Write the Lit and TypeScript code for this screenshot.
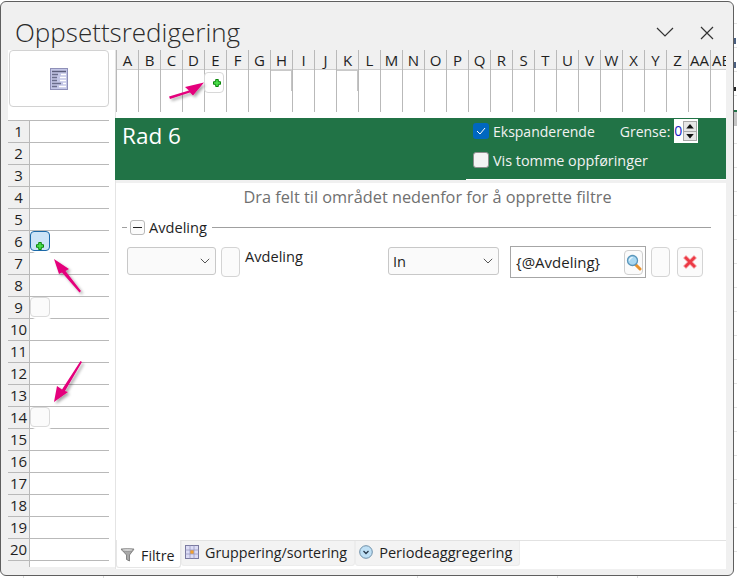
import { LitElement, html, css, svg } from "lit";
import { customElement } from "lit/decorators.js";

const COLS = "A B C D E F G H I J K L M N O P Q R S T U V W X Y Z AA AB".split(" ");
const ROWS = Array.from({ length: 21 }, (_, i) => i + 1);

const plus = svg`<svg class="plus" width="8" height="8" viewBox="0 0 8 8"><path d="M2.700.5h2.600v2.200h2.200v2.600H5.300v2.200H2.700V5.300H.5V2.700h2.200z" fill="#4be04b" stroke="#0c860c" stroke-width="1"/></svg>`;
const chevron = svg`<svg class="chev" width="10" height="6" viewBox="0 0 10 6"><path d="M.8.8L5 5l4.200-4.200" fill="none" stroke="#555" stroke-width="1"/></svg>`;

@customElement("app-root")
export class AppRoot extends LitElement {
  static styles = css`
    :host {
      display: block;
      position: relative;
      width: 737px;
      height: 578px;
      overflow: hidden;
      background:
        repeating-linear-gradient(to bottom, transparent 0 23px, #e2e2e2 23px 24px);
      font-family: "Open Sans", "Liberation Sans", sans-serif;
      color: #1f1f1f;
    }
    .edge {
      position: absolute;
      left: 734px;
      top: 110px;
      width: 3px;
      height: 14px;
      background: #c6c6c6;
      border-top: 2px solid #217346;
    }
    .frag {
      position: absolute;
      left: 734px;
      width: 2px;
      background: #4a5f80;
    }
    .f1 { top: 38px; height: 6px; }
    .f2 { top: 62px; height: 6px; }
    .f3 { top: 87px; height: 4px; background: #222; }
    .foot {
      position: absolute;
      left: 0;
      top: 575px;
      width: 737px;
      height: 3px;
      background:
        linear-gradient(#dcdcdc, #dcdcdc) 23px 0 / 1px 3px no-repeat,
        linear-gradient(#dcdcdc, #dcdcdc) 103px 0 / 1px 3px no-repeat,
        linear-gradient(#dcdcdc, #dcdcdc) 417px 0 / 1px 3px no-repeat,
        linear-gradient(#dcdcdc, #dcdcdc) 557px 0 / 1px 3px no-repeat,
        linear-gradient(#dcdcdc, #dcdcdc) 637px 0 / 1px 3px no-repeat,
        #fff;
    }
    .window {
      position: relative;
      box-sizing: border-box;
      width: 734px;
      height: 575px;
      margin-top: 1px;
      background: #f0f0f0;
      border: 1px solid #5f5f5f;
      border-radius: 6px;
      display: flex;
      flex-direction: column;
      padding: 0 7px 6px 7px;
    }
    .titlebar {
      height: 48px;
      flex: none;
      display: flex;
      align-items: center;
      padding-top: 11px;
      box-sizing: border-box;
    }
    .title {
      font-size: 26px;
      line-height: 36px;
      font-weight: 300;
      color: #2b2b2b;
      margin-left: 7px;
      flex: 1;
    }
    .winbtn { margin-right: 25px; display: block; }
    .winbtn.down { margin-right: 29px; }
    .winbtn.close { margin-right: 12px; margin-left: -3px; margin-top: 2px; }
    .body {
      flex: 1;
      min-height: 0;
      display: grid;
      grid-template-columns: 107px 1fr;
      overflow: hidden;
    }
    .left {
      display: flex;
      flex-direction: column;
      overflow: hidden;
      height: 517px;
      background: #fff;
    }
    .card {
      flex: none;
      box-sizing: border-box;
      margin-left: 1px;
      width: 100px;
      height: 57px;
      border: 1px solid #d2d2d2;
      border-radius: 4px;
      display: flex;
      align-items: center;
      justify-content: center;
    }
    .rows {
      margin-top: 13px;
      border-top: 1px solid #b9b9b9;
      width: 101px;
    }
    .row {
      display: flex;
      height: 22px;
      flex: none;
    }
    .rownum {
      width: 22px;
      box-sizing: border-box;
      background: #f0f0f0;
      border-bottom: 1px solid #b9b9b9;
      border-right: 1px solid #b9b9b9;
      font-size: 15px;
      line-height: 21px;
      text-align: center;
    }
    .rowcell {
      flex: 1;
      border-bottom: 1px solid #b9b9b9;
      position: relative;
    }
    .rowbtn {
      position: absolute;
      left: 0;
      top: 0;
      box-sizing: border-box;
      width: 20px;
      height: 20px;
      border: 1px solid #dadada;
      border-radius: 4px;
      background: #fbfbfb;
      box-shadow: 2px 2px 0 #fff;
      display: flex;
      align-items: flex-start;
      justify-content: center;
    }
    .rowbtn.on {
      background: #cde4f7;
      border: 1px solid #1c69a8;
      padding-top: 10px;
    }
    .right {
      display: flex;
      flex-direction: column;
      min-width: 0;
      border-left: 1px solid #e4e4e4;
      background: #fff;
    }
    .cols {
      display: flex;
      flex: none;
      height: 62px;
      overflow: hidden;
    }
    .col {
      flex: 0 0 22px;
      box-sizing: border-box;
      border-left: 1px solid #b9b9b9;
      display: flex;
      flex-direction: column;
      position: relative;
    }
    .colhead {
      height: 21px;
      background: #f0f0f0;
      border-bottom: 1px solid #cfcfcf;
      font-size: 15px;
      line-height: 21px;
      text-align: center;
      white-space: nowrap;
      overflow: hidden;
    }
    .slot {
      height: 21px;
      flex: none;
      box-sizing: border-box;
    }
    .slot.ghost {
      background: #fff;
      border-top: 1px solid #c9c9c9;
      border-right: 2px solid #c4c4c4;
      margin-right: -1px;
    }
    .colbtn {
      position: absolute;
      left: -1px;
      top: 22px;
      box-sizing: border-box;
      width: 20px;
      height: 21px;
      background: #fff;
      border: 1px solid #d8d8d8;
      border-radius: 4px;
      display: flex;
      justify-content: flex-end;
      padding: 6px 2px 0 0;
    }
    .green {
      flex: none;
      margin-top: 6px;
      margin-left: -1px;
      height: 62px;
      background: #217346;
      color: #fff;
      display: flex;
      justify-content: space-between;
    }
    .rad {
      font-size: 22.500px;
      line-height: 30px;
      margin: 3px 0 0 7px;
    }
    .opts {
      width: 260px;
      box-sizing: border-box;
      padding: 3px 0 0 7px;
      border-bottom: 1px solid #fff;
      display: flex;
      flex-direction: column;
      gap: 9px;
      font-size: 14px;
      color: #f2f2f2;
    }
    .opt { display: flex; align-items: center; height: 20px; }
    .wide { font-size: 14.400px; }
    .check {
      box-sizing: border-box;
      width: 16px;
      height: 16px;
      border-radius: 3px;
      margin-right: 4px;
      flex: none;
      display: flex;
      align-items: center;
      justify-content: center;
    }
    .check.on { background: #0067c0; }
    .check.off { background: #f3f3f3; border: 1px solid #8d8d8d; }
    .grense { margin-left: 25px; }
    .spin {
      width: 24px;
      height: 24px;
      margin-left: 4px;
      background: #fff;
      display: flex;
      align-items: center;
      color: #1a1ac0;
      font-size: 14px;
      line-height: 24px;
    }
    .spin span { width: 8px; overflow: hidden; margin-right: 1px; flex: none; }
    .arrows {
      width: 14px;
      height: 20px;
      background: #e6e6e6;
      border: 1px solid #a8a8a8;
      display: flex;
      flex-direction: column;
      box-sizing: border-box;
    }
    .arrows svg { flex: 1; display: block; margin: 0 auto; }
    .arrows svg:first-child { border-bottom: 1px solid #a8a8a8; width: 12px; }
    .panelwrap {
      flex: 1;
      min-height: 0;
      display: flex;
      flex-direction: column;
      background: #f0f0f0;
      padding-top: 3px;
    }
    .panel {
      flex: 1;
      min-height: 0;
      background: #fff;
      display: flex;
      flex-direction: column;
      border-bottom: 1px solid #e2e2e2;
    }
    .hint {
      text-align: center;
      font-size: 16.300px;
      line-height: 20px;
      color: #707070;
      margin-top: 4px;
      padding-left: 13px;
    }
    .legend {
      display: flex;
      align-items: center;
      height: 16px;
      margin: 12px 15px 0 6px;
      font-size: 14.600px;
    }
    .legend i { height: 1px; background: #a0a0a0; display: block; }
    .legend .a { width: 5px; margin-right: 3px; }
    .legend .b { flex: 1; margin-left: 5px; }
    .minus {
      box-sizing: border-box;
      width: 15px;
      height: 15px;
      border: 1px solid #b9b9b9;
      border-radius: 3px;
      background: #fbfbfb;
      margin-right: 4px;
      display: flex;
      align-items: center;
      justify-content: center;
    }
    .filter {
      display: flex;
      align-items: flex-start;
      margin: 12px 0 0 11px;
      font-size: 14.600px;
    }
    .select {
      box-sizing: border-box;
      height: 28px;
      border: 1px solid #c8c8c8;
      border-radius: 3px;
      background: #fafafa;
      display: flex;
      align-items: center;
      justify-content: space-between;
      padding: 0 5px 0 4px;
      flex: none;
    }
    .w89 { width: 89px; }
    .w111 { width: 111px; }
    .btn {
      box-sizing: border-box;
      flex: none;
      width: 19px;
      height: 30px;
      border: 1px solid #d4d4d4;
      border-radius: 4px;
      background: #fbfbfb;
    }
    .m5 { margin-left: 5px; }
    .field {
      width: 143px;
      margin: -1px 0 0 5px;
      line-height: 20px;
      flex: none;
    }
    .input {
      box-sizing: border-box;
      width: 136px;
      height: 32px;
      margin-top: -1px;
      margin-left: 11px;
      border: 1px solid #a6a6a6;
      display: flex;
      align-items: center;
      justify-content: space-between;
      padding: 0 2px 0 5px;
      flex: none;
      font-size: 15px;
    }
    .search {
      box-sizing: border-box;
      width: 19px;
      height: 25px;
      border: 1px solid #cfcfcf;
      border-radius: 4px;
      background: #fbfbfb;
      display: flex;
      align-items: center;
      justify-content: center;
    }
    .del {
      box-sizing: border-box;
      flex: none;
      width: 26px;
      height: 30px;
      margin-left: 7px;
      border: 1px solid #d4d4d4;
      border-radius: 4px;
      background: #fbfbfb;
      display: flex;
      align-items: center;
      justify-content: center;
    }
    .tabs {
      flex: none;
      height: 28px;
      background: #fff;
      display: flex;
      align-items: flex-start;
      font-size: 14.300px;
    }
    .tab {
      box-sizing: border-box;
      height: 25px;
      background: #f3f3f3;
      border: 1px solid #ececec;
      border-top: 0;
      border-radius: 0 0 3px 3px;
      display: flex;
      align-items: center;
      gap: 6px;
      padding: 0 7px 2px 3px;
    }
    .tab.long { font-size: 14.600px; }
    .tab.active {
      height: 28px;
      width: 65px;
      background: #fff;
      margin-top: -1px;
      border-color: #e6e6e6;
      padding: 3px 0 0 3px;
      gap: 5px;
    }
    .overlay {
      position: absolute;
      left: 0;
      top: 0;
      pointer-events: none;
    }
  `;

  private col(c: string) {
    const ghost = c === "H" || c === "K";
    return html`<div class="col">
      <div class="colhead">${c}</div>
      <div class="slot ${ghost ? "ghost" : ""}"></div>
      <div class="slot"></div>
      ${c === "E" ? html`<div class="colbtn">${plus}</div>` : ""}
    </div>`;
  }

  private row(n: number) {
    return html`<div class="row">
      <div class="rownum">${n}</div>
      <div class="rowcell">
        ${n === 6 ? html`<div class="rowbtn on">${plus}</div>` : ""}
        ${n === 9 || n === 14 ? html`<div class="rowbtn"></div>` : ""}
      </div>
    </div>`;
  }

  render() {
    return html`
      <div class="edge"></div>
      <div class="frag f1"></div>
      <div class="frag f2"></div>
      <div class="frag f3"></div>
      <div class="foot"></div>
      <div class="window">
        <div class="titlebar">
          <div class="title">Oppsettsredigering</div>
          <svg class="winbtn down" width="18" height="10" viewBox="0 0 18 10"><path d="M1 1l8 8 8-8" fill="none" stroke="#333" stroke-width="1.200"/></svg>
          <svg class="winbtn close" width="14" height="14" viewBox="0 0 14 14"><path d="M1 1l12 12M13 1L1 13" fill="none" stroke="#333" stroke-width="1.200"/></svg>
        </div>
        <div class="body">
          <div class="left">
            <div class="card">
              <svg width="18" height="22" viewBox="0 0 18 22">
                <rect x=".5" y=".5" width="17" height="21" fill="#c3c6e6" stroke="#8f90b8"/>
                <path d="M2 3.500h14" stroke="#5c5f7c" stroke-width="1.500"/>
                <path d="M2 6.500h6M2 9.500h5M2 12.500h5M2 15.500h9M2 18.500h5" stroke="#6b6e8c" stroke-width="1.300"/>
                <path d="M11 6.500h5M10 9.500h6M10 12.500h6M13 15.500h3M9 18.500h7" stroke="#fff" stroke-width="1.500"/>
              </svg>
            </div>
            <div class="rows">${ROWS.map((n) => this.row(n))}</div>
          </div>
          <div class="right">
            <div class="cols">${COLS.map((c) => this.col(c))}</div>
            <div class="green">
              <div class="rad">Rad 6</div>
              <div class="opts">
                <div class="opt">
                  <div class="check on">
                    <svg width="10" height="8" viewBox="0 0 10 8"><path d="M1 4l3 3 5-6" fill="none" stroke="#fff" stroke-width="1"/></svg>
                  </div>
                  Ekspanderende
                  <span class="grense">Grense:</span>
                  <div class="spin">
                    <span>0</span>
                    <div class="arrows">
                      <svg width="10" height="9" viewBox="0 0 10 9"><path d="M5 2l4 5H1z" fill="#111"/></svg>
                      <svg width="10" height="9" viewBox="0 0 10 9"><path d="M5 7L1 2h8z" fill="#111"/></svg>
                    </div>
                  </div>
                </div>
                <div class="opt wide">
                  <div class="check off"></div>
                  Vis tomme oppføringer
                </div>
              </div>
            </div>
            <div class="panelwrap">
              <div class="panel">
                <div class="hint">Dra felt til området nedenfor for å opprette filtre</div>
                <div class="legend">
                  <i class="a"></i>
                  <div class="minus"><svg width="9" height="1" viewBox="0 0 9 1"><path d="M0 .5h9" stroke="#222"/></svg></div>
                  Avdeling
                  <i class="b"></i>
                </div>
                <div class="filter">
                  <div class="select w89"><span></span>${chevron}</div>
                  <div class="btn m5"></div>
                  <div class="field">Avdeling</div>
                  <div class="select w111"><span>In</span>${chevron}</div>
                  <div class="input">
                    <span>{@Avdeling}</span>
                    <div class="search">
                      <svg width="16" height="17" viewBox="0 0 16 17">
                        <path d="M9 10l5 5" stroke="#e8912d" stroke-width="3" stroke-linecap="round"/>
                        <circle cx="6.500" cy="6.500" r="5" fill="#a9d8f2" stroke="#5a96bb" stroke-width="1.300"/>
                        <path d="M3.500 6.500a3 3 0 0 1 3-3" stroke="#fff" fill="none"/>
                      </svg>
                    </div>
                  </div>
                  <div class="btn m5"></div>
                  <div class="del">
                    <svg width="16" height="16" viewBox="0 0 16 16"><path d="M1.500 4L4 1.500 8 5.500l4-4L14.500 4l-4 4 4 4-2.500 2.500-4-4-4 4L1.500 12l4-4z" fill="#ec3a45" stroke="#f7b5b9" stroke-width=".8"/></svg>
                  </div>
                </div>
              </div>
              <div class="tabs">
                <div class="tab active">
                  <svg width="16" height="14" viewBox="0 0 16 14"><path d="M1 1h13L9.500 7v6l-3-1.500V7z" fill="#a8a8a8" stroke="#6e6e6e" stroke-width=".8"/><ellipse cx="7.500" cy="2" rx="6" ry="1.300" fill="#ddd" stroke="#777" stroke-width=".6"/></svg>
                  Filtre
                </div>
                <div class="tab">
                  <svg width="14" height="14" viewBox="0 0 14 14"><rect x=".5" y=".5" width="13" height="13" fill="#dcdcf5" stroke="#7a7aa0"/><rect x="5" y="5" width="4" height="4" fill="#f4a12c"/><path d="M5 .5v13M9 .5v13M.5 5h13M.5 9h13" stroke="#9a9ac0" stroke-width=".8"/></svg>
                  Gruppering/sortering
                </div>
                <div class="tab long">
                  <svg width="14" height="14" viewBox="0 0 14 14"><circle cx="7" cy="7" r="6.300" fill="#bfe0f5" stroke="#6d8fa8"/><path d="M4.500 6L7 8.500 9.500 6" fill="none" stroke="#26384a" stroke-width="1.300"/></svg>
                  Periodeaggregering
                </div>
              </div>
            </div>
          </div>
        </div>
      </div>
      <svg class="overlay" width="737" height="578" viewBox="0 0 737 578">
        <defs>
          <filter id="sh" x="-30%" y="-30%" width="170%" height="170%"><feDropShadow dx="2" dy="2" stdDeviation="1.500" flood-color="#000" flood-opacity=".35"/></filter>
        </defs>
        <g fill="#e4007c" filter="url(#sh)">
          <path d="M204 82.500L185 87l4 3.500-20 6 1 2.500 20-6.500 3 3z"/>
          <path d="M54 259l15 10-3.500 2L81 291l-1.500 1.500L62 272.500 59 274z"/>
          <path d="M54 402l3-16 5 3.500L80.500 361l1.500 1-17 29 3 1z"/>
        </g>
      </svg>
    `;
  }
}
